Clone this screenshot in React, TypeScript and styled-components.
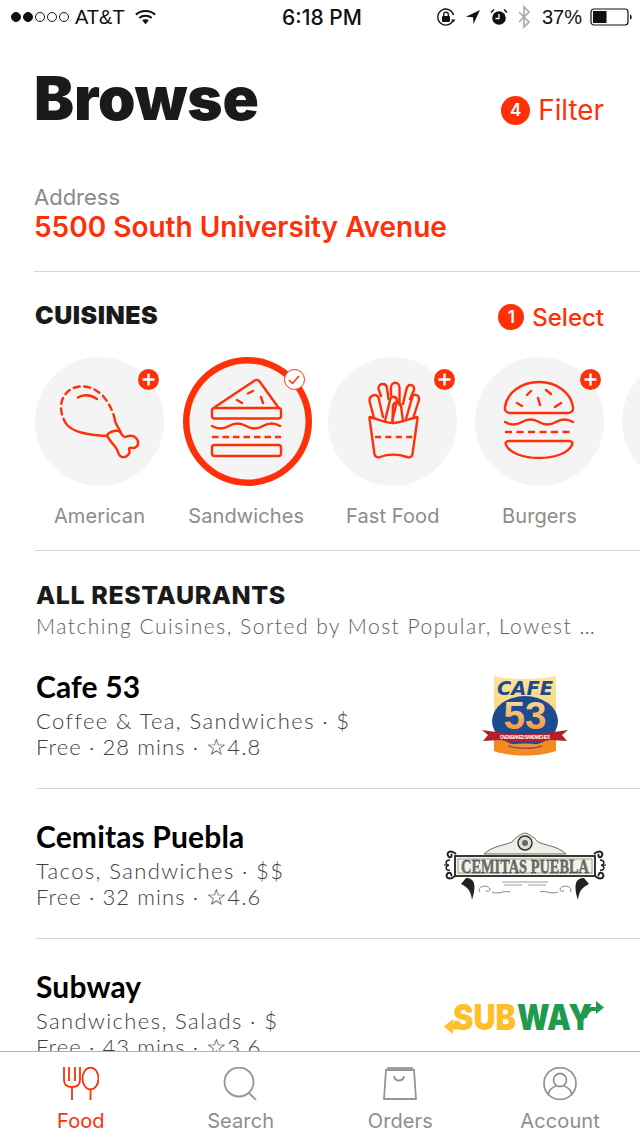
import React from "react";
import styled, { createGlobalStyle } from "styled-components";

const RED = "#ff3008";

const Global = createGlobalStyle`
  html, body { margin: 0; padding: 0; background: #fff; }
  * { box-sizing: border-box; }
  #root { width: 640px; height: 1135px; }
`;

const Page = styled.div`
  width: 640px; height: 1135px; display: flex; flex-direction: column; overflow: hidden;
  background: #fff; font-family: Inter, "Liberation Sans", sans-serif;
`;
const StatusBar = styled.div`
  height: 34px; flex: none; display: grid; grid-template-columns: 1fr auto 1fr; align-items: center;
  padding: 0 7px 0 11px; color: #111; font-size: 20px; font-family: "Liberation Sans", sans-serif;
`;
const StatusLeft = styled.div`display: flex; align-items: center; gap: 5px;`;
const Carrier = styled.span`margin-right: 5px;`;
const StatusRight = styled.div`display: flex; align-items: center; justify-content: flex-end; gap: 8px;`;
const StatusIcons = styled.div`display: flex; align-items: center; gap: 9px; margin-right: 3px;`;
const Dots = styled.div`display: flex; gap: 2px; margin-right: 1px;`;
const Dot = styled.span<{ $on: boolean }>`
  width: 10px; height: 10px; border-radius: 50%; border: 1px solid #111;
  background: ${(p) => (p.$on ? "#111" : "transparent")};
`;
const Time = styled.div`font-weight: 500; font-size: 21px; font-family: Inter, sans-serif;`;
const Main = styled.main`flex: 1; min-height: 0; overflow: hidden;`;
const Header = styled.header`
  display: flex; justify-content: space-between; align-items: flex-start; height: 116px;
  padding: 29px 36px 0 34px;
`;
const Title = styled.h1`
  margin: 0; font-size: 60px; line-height: 70px; font-weight: 900; color: #1a1a1a; letter-spacing: -0.1px;
`;
const Action = styled.div<{ $size: number }>`
  display: flex; align-items: center; gap: 8px; color: ${RED}; font-size: ${(p) => p.$size}px;
`;
const SelectAction = styled(Action)`font-weight: 500; margin-top: 4px;`;
const Count = styled.span<{ $d: number }>`
  width: ${(p) => p.$d}px; height: ${(p) => p.$d}px; border-radius: 50%; background: ${RED}; color: #fff;
  display: flex; align-items: center; justify-content: center; font-size: 17px; font-weight: 600;
`;
const FilterWrap = styled.div`padding-top: 30px;`;
const AddressBlock = styled.section`
  margin-left: 34px; height: 122px; padding-top: 32px; border-bottom: 1px solid #d6d6d6;
`;
const AddressLabel = styled.div`font-size: 22px; line-height: 30px; color: #8a8a8a;`;
const AddressValue = styled.div`font-size: 28px; line-height: 32px; font-weight: 600; color: ${RED}; margin-top: -1px;`;
const Cuisines = styled.section`height: 279px; margin-left: 35px; border-bottom: 1px solid #d6d6d6; padding-top: 26px; overflow: hidden;`;
const SectionHead = styled.div`
  display: flex; justify-content: space-between; align-items: center; padding-right: 36px; height: 34px;
`;
const SectionTitle = styled.h2`margin: 0; font-size: 25px; font-weight: 900; color: #1a1a1a; letter-spacing: 0.5px;`;
const Carousel = styled.div`display: flex; gap: 17.67px; margin-top: 25px; width: 800px;`;
const Cuisine = styled.div`width: 129px; flex: none; display: flex; flex-direction: column; align-items: center;`;
const Disc = styled.div<{ $selected?: boolean }>`
  position: relative; width: 129px; height: 129px; border-radius: 50%; background: #f4f4f4; flex: none;
  ${(p) => (p.$selected ? `box-shadow: inset 0 0 0 6.5px ${RED}; margin-left: 3px;` : "")}
`;
const Badge = styled.span<{ $selected?: boolean; $x: number }>`
  position: absolute; left: ${(p) => p.$x}px; top: 12px; width: 21px; height: 21px; border-radius: 50%;
  display: flex; align-items: center; justify-content: center;
  background: ${(p) => (p.$selected ? "#fff" : RED)};
  ${(p) => (p.$selected ? `border: 1.5px solid ${RED};` : "")}
`;
const CuisineName = styled.div`
  margin-top: 18px; font-size: 20px; line-height: 24px; color: #8c8c8c; white-space: nowrap; letter-spacing: 0.1px;
`;
const ListHead = styled.section`margin-left: 36px; padding-top: 28px; height: 92px;`;
const ListTitle = styled.h2`margin: 0; font-size: 25px; line-height: 32px; font-weight: 800; color: #1a1a1a; letter-spacing: 0.58px;`;
const ListSub = styled.div`
  font-size: 21px; line-height: 30px; color: #5e5e5e; letter-spacing: 1.5px; white-space: nowrap; font-weight: 300;
  font-family: Lato, sans-serif;
`;
const Row = styled.article`
  margin-left: 36px; height: 150px; display: flex; justify-content: space-between;
  border-bottom: 1px solid #d6d6d6; padding-top: 29px;
  &:first-of-type { height: 146px; padding-top: 25px; }
`;
const RowText = styled.div`display: flex; flex-direction: column;`;
const RowName = styled.h3`margin: 0 0 4px; font-family: Lato, sans-serif; font-size: 30px; line-height: 36px; font-weight: 700; color: #000; letter-spacing: 0.15px;`;
const RowLine = styled.div<{ $spacing: number }>`
  font-family: Lato, sans-serif; font-size: 22px; line-height: 26px; color: #404040; font-weight: 300;
  letter-spacing: ${(p) => p.$spacing}px;
`;
const Star = styled.span`font-size: 23px; line-height: 0; letter-spacing: 0; font-family: "DejaVu Sans", sans-serif;`;
const LogoBox = styled.div`width: 190px; height: 100px; flex: none; margin-right: 20px; display: flex; align-items: center; justify-content: center;`;
const TabBar = styled.nav`
  height: 84px; flex: none; display: grid; grid-template-columns: repeat(4, 1fr); border-top: 1px solid #b2b2b2; background: #fff;
  padding-left: 1px;
`;
const Tab = styled.div<{ $active?: boolean }>`
  display: flex; flex-direction: column; align-items: center; padding-top: 15px;
  color: ${(p) => (p.$active ? RED : "#8e8e8e")}; font-size: 20px; line-height: 24px; letter-spacing: 0.1px;
`;
const TabLabel = styled.span`margin-top: 9px;`;

const Stroke = { fill: "none", stroke: RED, strokeWidth: 2.4, strokeLinecap: "round" as const, strokeLinejoin: "round" as const };

const Wave = ({ y, x1, x2 }: { y: number; x1: number; x2: number }) => {
  const n = 2; const w = (x2 - x1) / n;
  let d = `M${x1} ${y}`;
  for (let i = 0; i < n; i++) d += ` q${w / 4} 5 ${w / 2} 0 q${w / 4} -5 ${w / 2} 0`;
  return <path d={d} />;
};

const Chicken = () => (
  <svg width="129" height="129" viewBox="0 0 129 129"><g {...Stroke}>
    <path d="M80 63C78 54 74 46 68 39C60 31 51 28 42 30C32 32 26 41 26 50C26 56 28 61 30 65" strokeDasharray="6 4.6" />
    <path d="M43 40.5C47 37.5 55 37 62 42" />
    <path d="M30 65C36 76 55 78 72 79" />
    <path d="M80 64C81 68 84 71 86 76" />
    <path d="M72 78C74 75 80 73 84 74C87 76 87 80 90 80C93 79 98 77 101 81C105 85 103 90 99 91C96 91 94 90 94 92C96 96 92 101 87 100C83 99 84 95 81 91C78 87 74 83 72 78Z" />
  </g></svg>
);
const Sandwich = () => (
  <svg width="129" height="129" viewBox="0 0 129 129"><g {...Stroke}>
    <path d="M32 50L71 24C73 22 76 23 77 25L95 50" />
    <rect x="29" y="51" width="69" height="10.5" rx="2.5" />
    <Wave y={69} x1={29} x2={97} />
    <path d="M29 80H98" strokeDasharray="6.5 4" strokeLinecap="butt" />
    <rect x="29" y="88" width="69" height="11" rx="2.5" />
    <path d="M54 43L59 46M65 36.500L70 34M78 40L80 46" />
  </g></svg>
);
const Fries = () => (
  <svg width="129" height="129" viewBox="0 0 129 129"><g {...Stroke}>
    <path d="M42 60C50 62 57 66 65 66C73 66 81 62 89 60C90 60 89.500 62 89 65L84.500 97C84 100 82 101 79 100C70 97 60 97 52 100C50 101 47 100 46.500 97L42 65C41.500 62 41 60 42 60Z" />
    <path d="M47 80H85" strokeDasharray="6 4.400" strokeLinecap="butt" />
    <path d="M46 61L41.500 44C41 38 49 36 50.500 40.500L55 60" />
    <path d="M53 39L50.500 32C50 26 58 25 59 31L60.500 42" />
    <path d="M57 64L62 43C63 38 69 39 69 44L64 65" />
    <path d="M63 38V31C63 24 71.500 24 71.500 31V48" />
    <path d="M64.500 66L65 49C66 44 72 44 73 49L75 64" />
    <path d="M75 47L78.500 32C80 26 87 27 86 33L82 42" />
    <path d="M78 62L84 41C85 36 91.500 37 91 43L85.500 60" />
  </g></svg>
);
const Burger = () => (
  <svg width="129" height="129" viewBox="0 0 129 129"><g {...Stroke}>
    <path d="M35 56C31 56 29.500 53 30 50C32 36 46 25 64 25C82 25 96 36 98 50C98.500 53 97 56 93 56Z" />
    <Wave y={65} x1={30} x2={98} />
    <path d="M30 75H98" strokeDasharray="7 4.500" strokeLinecap="butt" />
    <path d="M34 84H94C97 84 98 86 97 88C93 96 80 101 64 101C48 101 35 96 31 88C30 86 31 84 34 84Z" />
    <path d="M42 46L47 49M52 38L56 34M71 33L76 37M63 41L65 48M80 50L86 46" />
  </g></svg>
);

const Plus = () => (
  <svg width="13" height="13" viewBox="0 0 13 13"><path d="M6.500 0.500V12.500M0.500 6.500H12.500" stroke="#fff" strokeWidth="2.400" /></svg>
);
const Check = () => (
  <svg width="12" height="10" viewBox="0 0 12 10"><path d="M1 5L4.500 8.500L11 1" fill="none" stroke={RED} strokeWidth="1.500" /></svg>
);

const Wifi = () => (
  <svg width="21" height="16" viewBox="0 0 22 16"><g fill="none" stroke="#111" strokeWidth="2.200">
    <path d="M1 5.500C6.500 0.500 15.500 0.500 21 5.500" /><path d="M4.500 9C8 6 14 6 17.500 9" /></g>
    <path d="M7.500 11.500C9.500 10 12.500 10 14.500 11.500L11 15.500Z" fill="#111" /></svg>
);
const LockRotate = () => (
  <svg width="20" height="20" viewBox="0 0 20 20"><path d="M17 13.500A8 8 0 1 1 17.500 8" fill="none" stroke="#111" strokeWidth="1.300" />
    <path d="M15 12.500H19.500L17.200 15.500Z" fill="#111" /><rect x="6" y="9" width="8" height="6" rx="1" fill="#111" />
    <path d="M7.700 9V7.500A2.300 2.300 0 0 1 12.300 7.500V9" fill="none" stroke="#111" strokeWidth="1.300" /></svg>
);
const Arrow = () => (
  <svg width="16" height="16" viewBox="0 0 16 16"><path d="M15 1L1 7.800L8 8.200L8.500 15Z" fill="#111" /></svg>
);
const Alarm = () => (
  <svg width="18" height="18" viewBox="0 0 18 18"><circle cx="9" cy="10" r="6.800" fill="#111" />
    <path d="M9 6V10.500H5.500" fill="none" stroke="#fff" strokeWidth="1.300" />
    <path d="M1 4.500L4 1.500M17 4.500L14 1.500" stroke="#111" strokeWidth="1.500" /></svg>
);
const Bluetooth = () => (
  <svg width="14" height="24" viewBox="0 0 14 24"><path d="M2 7L12 17L7 22V2L12 7L2 17" fill="none" stroke="#a8a8a8" strokeWidth="1.600" /></svg>
);
const Battery = () => (
  <svg width="43" height="18" viewBox="0 0 43 18"><rect x="1" y="1" width="37" height="16" rx="3" fill="none" stroke="#111" strokeWidth="1.200" />
    <rect x="3" y="3" width="13.500" height="12" fill="#111" /><path d="M40 6.500C42 6.800 42.500 11.200 40 11.500Z" fill="#111" /></svg>
);

const Cafe53Logo = () => (
  <svg width="86" height="86" viewBox="0 3 86 86">
    <defs>
      <linearGradient id="five" x1="0" y1="0" x2="0" y2="1"><stop offset="0" stopColor="#fde6b0" /><stop offset="1" stopColor="#f28a22" /></linearGradient>
      <linearGradient id="ground" x1="0" y1="0" x2="0" y2="1"><stop offset="0" stopColor="#fbe49c" /><stop offset="1" stopColor="#f8c860" /></linearGradient>
    </defs>
    <path d="M12 4C30 8 55 8 74 4V79C55 85 30 85 12 79Z" fill="url(#ground)" />
    <path d="M12 62H74V79C55 85 30 85 12 79Z" fill="#f28a1e" />
    <text x="43" y="23" textAnchor="middle" fontFamily="DejaVu Sans" fontStyle="italic" fontWeight="700" fontSize="19" fill="#1d4a8c" textLength="56" lengthAdjust="spacingAndGlyphs">CAFE</text>
    <ellipse cx="43" cy="49" rx="33" ry="25" fill="#1c4b8f" />
    <text x="43" y="57" textAnchor="middle" fontFamily="Liberation Sans" fontWeight="700" fontSize="39" fill="url(#five)" textLength="43" lengthAdjust="spacingAndGlyphs">53</text>
    <path d="M0 58L14 60C30 63 56 63 72 60L86 58L80 63L85 69L68 68C54 71 32 71 18 68L1 69L6 63Z" fill="#b41f2a" />
    <text x="43" y="67" textAnchor="middle" fontFamily="Liberation Sans" fontWeight="700" fontSize="4.500" fill="#fff" textLength="50">OVEN BAKED SANDWICHES</text>
    <ellipse cx="43" cy="75" rx="18" ry="3.500" fill="#d89a4a" />
    <path d="M26 74C35 77 52 77 60 74" stroke="#c73a2a" strokeWidth="1.600" fill="none" />
  </svg>
);
const Flourish = () => (
  <g fill="none" stroke="#222" strokeWidth="2">
    <path d="M12 22C6 17 1 21 5 25C8 26 8 23 7 22" />
    <path d="M11 44C5 49 0 45 4 41C7 40 8 43 7 44" />
    <path d="M6 28C1 28 1 33 5 33C1 34 1 39 6 38" strokeWidth="1.500" />
    <path d="M0 33H4" strokeWidth="1.200" />
    <path d="M22 46C30 46 33 52 28 68C27 60 25 56 17 52Z" fill="#222" stroke="none" />
    <path d="M36 60C32 54 44 52 46 57C46 60 42 60 42 58M48 60C54 63 60 58 66 60" stroke="#777" strokeWidth="0.900" />
  </g>
);
const CemitasLogo = () => (
  <svg width="162" height="72" viewBox="0 0 162 72">
    <path d="M40 22C48 14 62 13 68 10C72 4 80 1 81 1C82 1 90 4 94 10C100 13 114 14 122 22Z" fill="#f0efe4" stroke="#444" strokeWidth="0.800" />
    <circle cx="81" cy="11" r="7" fill="#ddd" stroke="#333" strokeWidth="1.500" />
    <circle cx="81" cy="11" r="3" fill="#666" />
    <rect x="11" y="24" width="140" height="20" fill="#f3f2e8" stroke="#222" strokeWidth="1.800" />
    <rect x="14" y="27" width="134" height="14" fill="none" stroke="#666" strokeWidth="0.600" />
    <text x="81" y="41" textAnchor="middle" fontFamily="Liberation Serif" fontWeight="700" fontSize="18" fill="#6f6f66" stroke="#333" strokeWidth="0.300" textLength="128" lengthAdjust="spacingAndGlyphs">CEMITAS PUEBLA</text>
    <Flourish />
    <g transform="translate(162 0) scale(-1 1)"><Flourish /></g>
    <path d="M58 50H104M60 53H78M84 53H102" stroke="#999" strokeWidth="1" />
  </svg>
);
const SubwayLogo = () => (
  <svg width="162" height="36" viewBox="0 -2 162 36">
    <path d="M0 24.500L9 17V21.500H14V27.500H9V32Z" fill="#fdc029" />
    <text x="9" y="28" fontFamily="Inter" fontWeight="900" fontSize="36" fill="#fdc029" textLength="63" lengthAdjust="spacingAndGlyphs">SUB</text>
    <text x="73" y="28" fontFamily="Inter" fontWeight="900" fontSize="36" fill="#1f9a4e" textLength="75" lengthAdjust="spacingAndGlyphs">WAY</text>
    <path d="M136 14C138 8 142 5 148 5H152V-1L160 5.500L152 12V9H149C146 9 144 12 143 16H136Z" fill="#1f9a4e" />
  </svg>
);

const cuisines = [
  { name: "American", Icon: Chicken, x: 103 },
  { name: "Sandwiches", Icon: Sandwich, selected: true, x: 100.5 },
  { name: "Fast Food", Icon: Fries, x: 106 },
  { name: "Burgers", Icon: Burger, x: 105 },
  { name: "", Icon: null, x: 0 },
];
const restaurants = [
  { name: "Cafe 53", l1: "Coffee & Tea, Sandwiches · $", pre: "Free · 28 mins · ", score: "4.8", Logo: Cafe53Logo },
  { name: "Cemitas Puebla", l1: "Tacos, Sandwiches · $$", pre: "Free · 32 mins · ", score: "4.6", Logo: CemitasLogo },
  { name: "Subway", l1: "Sandwiches, Salads · $", pre: "Free · 43 mins · ", score: "3.6", Logo: SubwayLogo },
];

const gray = { fill: "none", stroke: "#969696", strokeWidth: 1.8 };

export default function App() {
  return (
    <Page>
      <Global />
      <StatusBar>
        <StatusLeft>
          <Dots>{[1, 1, 0, 0, 0].map((on, i) => <Dot key={i} $on={!!on} />)}</Dots>
          <Carrier>AT&amp;T</Carrier>
          <Wifi />
        </StatusLeft>
        <Time>6:18 PM</Time>
        <StatusRight>
          <StatusIcons><LockRotate /><Arrow /><Alarm /><Bluetooth /></StatusIcons>
          <span>37%</span>
          <Battery />
        </StatusRight>
      </StatusBar>
      <Main>
        <Header>
          <Title>Browse</Title>
          <FilterWrap>
            <Action $size={27.8}><Count $d={29}>4</Count>Filter</Action>
          </FilterWrap>
        </Header>
        <AddressBlock>
          <AddressLabel>Address</AddressLabel>
          <AddressValue>5500 South University Avenue</AddressValue>
        </AddressBlock>
        <Cuisines>
          <SectionHead>
            <SectionTitle>CUISINES</SectionTitle>
            <SelectAction $size={24}><Count $d={26}>1</Count>Select</SelectAction>
          </SectionHead>
          <Carousel>
            {cuisines.map((c, i) => (
              <Cuisine key={i}>
                <Disc $selected={c.selected}>
                  {c.Icon && <c.Icon />}
                  {c.Icon && <Badge $x={c.x} $selected={c.selected}>{c.selected ? <Check /> : <Plus />}</Badge>}
                </Disc>
                <CuisineName>{c.name}</CuisineName>
              </Cuisine>
            ))}
          </Carousel>
        </Cuisines>
        <ListHead>
          <ListTitle>ALL RESTAURANTS</ListTitle>
          <ListSub>Matching Cuisines, Sorted by Most Popular, Lowest …</ListSub>
        </ListHead>
        {restaurants.map((r) => (
          <Row key={r.name}>
            <RowText>
              <RowName>{r.name}</RowName>
              <RowLine $spacing={1.4}>{r.l1}</RowLine>
              <RowLine $spacing={1.1}>{r.pre}<Star>☆</Star>{r.score}</RowLine>
            </RowText>
            <LogoBox><r.Logo /></LogoBox>
          </Row>
        ))}
      </Main>
      <TabBar>
        <Tab $active>
          <svg width="36" height="33" viewBox="0 0 36 33"><g fill="none" stroke={RED} strokeWidth="1.800">
            <path d="M1 0V13C1 18 4 20 9 20C14 20 17 18 17 13V0M6 0V14M12 0V14M9 20V33" />
            <ellipse cx="27.500" cy="11.500" rx="8" ry="11" /><path d="M27.500 22.500V33" /></g></svg>
          <TabLabel>Food</TabLabel>
        </Tab>
        <Tab>
          <svg width="36" height="33" viewBox="0 0 36 33"><g {...gray}>
            <circle cx="16" cy="15" r="14.500" /><path d="M26 26L33 33" /></g></svg>
          <TabLabel>Search</TabLabel>
        </Tab>
        <Tab>
          <svg width="36" height="33" viewBox="0 0 36 33"><g {...gray}>
            <path d="M4 3H32L34 32H2Z" /><path d="M5 1H31" /><path d="M12 9C13 15 21 15 22 9" /></g></svg>
          <TabLabel>Orders</TabLabel>
        </Tab>
        <Tab>
          <svg width="36" height="33" viewBox="0 0 36 33"><g {...gray}>
            <circle cx="18" cy="16.500" r="16" /><circle cx="18" cy="13" r="6.500" />
            <path d="M6 28C7 22 11 20 14 19M30 28C29 22 25 20 22 19" /></g></svg>
          <TabLabel>Account</TabLabel>
        </Tab>
      </TabBar>
    </Page>
  );
}
